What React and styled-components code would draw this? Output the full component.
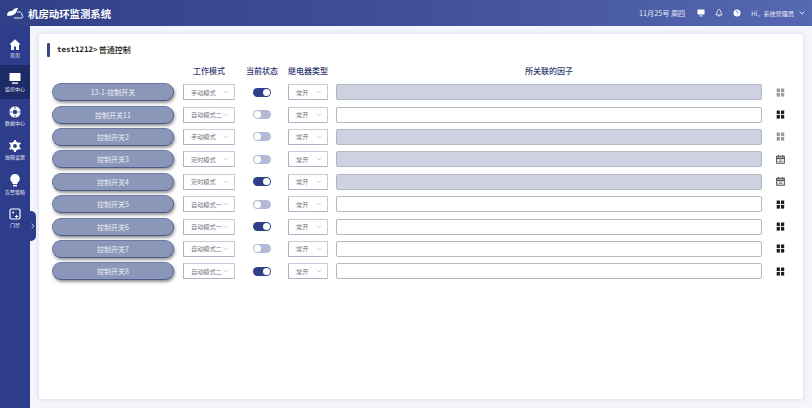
import React from 'react';
import styled, { createGlobalStyle } from 'styled-components';

const Global = createGlobalStyle`
  html, body { margin: 0; padding: 0; height: 100%; background: #f5f6fb; }
  body { font-family: "Noto Sans CJK SC", "Liberation Sans", sans-serif; overflow: hidden; }
`;

const Page = styled.div`
  width: 812px;
  height: 408px;
  display: flex;
  flex-direction: column;
  overflow: hidden;
`;

const Header = styled.header`
  height: 26px;
  flex: none;
  display: flex;
  align-items: center;
  justify-content: space-between;
  background: linear-gradient(90deg, #2f3f88 0%, #3f4f98 50%, #5668b2 100%);
  color: #fff;
  padding: 0 7px 0 6px;
`;

const Brand = styled.div`
  display: flex;
  align-items: center;
  gap: 4px;
  font-size: 10.4px;
  font-weight: 700;
`;

const HeaderRight = styled.div`
  display: flex;
  align-items: center;
  color: #e6e9f6;
`;

const DateText = styled.span`
  margin-right: 12px;
  font-size: 7.2px;
`;

const HeaderIcon = styled.span`
  display: flex;
  margin-right: 10px;
`;

const UserName = styled.span`
  font-size: 6.1px;
  margin-right: 5px;
`;

const Body = styled.div`
  flex: 1;
  display: flex;
  min-height: 0;
`;

const Sidebar = styled.nav`
  position: relative;
  width: 30px;
  flex: none;
  background: #2e3d8b;
  padding-top: 5px;
  display: flex;
  flex-direction: column;
`;

const NavItem = styled.div`
  height: 34px;
  flex: none;
  display: flex;
  flex-direction: column;
  align-items: center;
  justify-content: center;
  gap: 2px;
  color: #e8eaf6;
  font-size: 5px;
  line-height: 6px;
  background: ${p => (p.$active ? '#1c2a66' : 'transparent')};
`;

const Collapse = styled.div`
  position: absolute;
  left: 30px;
  top: 185px;
  width: 6px;
  height: 30px;
  background: #2e3d8b;
  border-radius: 0 5px 5px 0;
  display: flex;
  align-items: center;
  justify-content: center;
`;

const Main = styled.main`
  flex: 1;
  padding: 8px 9px 9px 9px;
  min-width: 0;
`;

const Card = styled.section`
  height: 100%;
  box-sizing: border-box;
  background: #fff;
  border-radius: 3px;
  box-shadow: 0 0 4px 1px #dcdfef;
  padding: 8px 13px 0 8px;
`;

const Crumb = styled.div`
  display: flex;
  align-items: center;
  height: 15px;
  font-size: 8px;
  font-weight: 500;
  color: #222;
`;

const CrumbBar = styled.i`
  width: 3px;
  height: 14px;
  border-radius: 1px;
  background: #3a4789;
  margin-right: 7px;
`;

const CrumbMono = styled.span`
  font-family: "DejaVu Sans Mono", monospace;
  font-size: 7.5px;
  font-weight: 700;
  margin-right: 1px;
`;

const Table = styled.div`
  margin-left: 5px;
`;

const Cols = '122px 9px 52px 18px 18px 17px 40px 8px 426px 14px 9px';

const HeadRow = styled.div`
  display: grid;
  grid-template-columns: ${Cols};
  height: 22px;
  align-items: center;
  margin-top: 2px;
  font-size: 8px;
  font-weight: 500;
  color: #2f3a6e;
`;

const HeadCell = styled.span`
  grid-column: ${p => p.$col};
  white-space: nowrap;
  justify-self: center;
`;

const Row = styled.div`
  display: grid;
  grid-template-columns: ${Cols};
  height: 22.4px;
  align-items: center;
`;

const SwitchButton = styled.div`
  grid-column: 1;
  height: 18px;
  border-radius: 9px;
  background: #8b97b8;
  border: 1px solid #6f7ba6;
  border-bottom: 1.5px solid #4e5a8c;
  border-right-color: #5c6896;
  box-sizing: border-box;
  box-shadow: 1px 2px 3px rgba(60, 60, 70, 0.55);
  color: #eef0f6;
  font-size: 7px;
  display: flex;
  align-items: center;
  justify-content: center;
`;

const Select = styled.div`
  grid-column: ${p => p.$col};
  height: 16px;
  box-sizing: border-box;
  background: #fff;
  border: 1px solid #c9ccd6;
  border-left-color: #aeb2c4;
  border-bottom-color: #aeb2c4;
  border-radius: 1px;
  display: flex;
  align-items: center;
  justify-content: space-between;
  padding: 0 5px 0 7px;
  font-size: 6.2px;
  color: #74777f;
`;

const Toggle = styled.div`
  grid-column: 5;
  justify-self: center;
  position: relative;
  width: 18px;
  height: 9px;
  border-radius: 5px;
  background: ${p => (p.$on ? '#2f3f88' : '#b4b9d6')};
`;

const Knob = styled.i`
  position: absolute;
  top: 1px;
  left: ${p => (p.$on ? '10px' : '1px')};
  width: 7px;
  height: 7px;
  border-radius: 50%;
  background: #fff;
`;

const Factor = styled.div`
  grid-column: 9;
  height: 16px;
  box-sizing: border-box;
  border: 1px solid #b4b6c0;
  border-radius: 2px;
  background: ${p => (p.$disabled ? '#cdd1e2' : '#fff')};
`;

const RowIcon = styled.span`
  grid-column: 11;
  display: flex;
  justify-content: center;
`;

const Chevron = () => (
  <svg width="6" height="4" viewBox="0 0 6 4" fill="none" stroke="#c4c6ce" strokeWidth="0.8">
    <path d="M.8.8 3 3 5.2.8" />
  </svg>
);

const Grid = ({ color }) => (
  <svg width="9" height="9" viewBox="0 0 9 9" fill={color}>
    <rect x="0.7" y="0.5" width="3.2" height="3.6" />
    <rect x="5" y="0.5" width="3.2" height="3.6" />
    <rect x="0.7" y="5" width="3.2" height="3.6" />
    <rect x="5" y="5" width="3.2" height="3.6" />
  </svg>
);

const Calendar = () => (
  <svg width="9" height="9" viewBox="0 0 9 9" fill="none" stroke="#333" strokeWidth="0.9">
    <rect x="0.7" y="1.2" width="7.6" height="7" />
    <path d="M.7 3.2h7.6" strokeWidth="1.2" />
    <path d="M2.5 0v1.5M6.5 0v1.5" strokeWidth="0.9" />
    <path d="M2.5 5h4M2.5 6.600h4" strokeWidth="0.6" />
  </svg>
);

const HomeIcon = () => (
  <svg width="12" height="11" viewBox="0 0 12 11" fill="#fff">
    <path d="M6 .3 .4 5.4h1.6V11h3V7.4h2V11h3V5.4h1.6z" />
  </svg>
);
const MonitorIcon = () => (
  <svg width="12" height="11" viewBox="0 0 12 11" fill="#fff">
    <rect x="0.5" y="0" width="11" height="8" />
    <rect x="3" y="9.4" width="6" height="1.4" />
  </svg>
);
const DataIcon = () => (
  <svg width="12" height="12" viewBox="0 0 12 12" fill="none" stroke="#fff">
    <circle cx="6" cy="6" r="4" strokeWidth="3.4" />
    <path d="M6 0v3M6 9v3M0 6h3M9 6h3" stroke="#2e3d8b" strokeWidth="0.8" />
  </svg>
);
const GearIcon = () => (
  <svg width="12" height="12" viewBox="0 0 12 12" fill="none" stroke="#fff">
    <circle cx="6" cy="6" r="3.2" strokeWidth="2.6" />
    <path d="M6 0v2.4M6 9.6V12M.6 3l2 1.200M9.400 7.800l2 1.200M.6 9l2-1.200M9.400 4.200l2-1.200" strokeWidth="2" />
  </svg>
);
const BulbIcon = () => (
  <svg width="10" height="13" viewBox="0 0 10 13" fill="#fff">
    <path d="M5 0a4.7 4.7 0 0 0-2.600 8.600V10h5.200V8.600A4.700 4.700 0 0 0 5 0z" />
    <rect x="3" y="10.800" width="4" height="1.600" />
  </svg>
);
const DoorIcon = () => (
  <svg width="12" height="12" viewBox="0 0 12 12" fill="none" stroke="#fff">
    <rect x="1" y="1" width="10" height="10" rx="1.500" strokeWidth="1.200" />
    <circle cx="4.200" cy="4.400" r="1" fill="#fff" stroke="none" />
    <path d="M6 8.500h3.200M7.600 7v3" strokeWidth="1" />
  </svg>
);

const CloudLogo = () => (
  <svg width="18" height="12" viewBox="0 0 18 12" fill="none">
    <path d="M1 8.500C1 5 4 3.600 6 4c1-2 4-3.500 6-3-1 2-1.500 5-4 6.500C6 9 3 9 1 8.500z" fill="#fff" />
    <path d="M11 5.500a3 3 0 0 1 5 2.500 2 2 0 0 1 0 3H8" stroke="#fff" strokeWidth="0.9" />
  </svg>
);

const rows = [
  { name: '13-1-控制开关', mode: '手动模式', on: true, disabled: true, icon: 'faded' },
  { name: '控制开关11', mode: '自动模式二', on: false, disabled: false, icon: 'grid' },
  { name: '控制开关2', mode: '手动模式', on: false, disabled: true, icon: 'faded' },
  { name: '控制开关3', mode: '定时模式', on: false, disabled: true, icon: 'cal' },
  { name: '控制开关4', mode: '定时模式', on: true, disabled: true, icon: 'cal' },
  { name: '控制开关5', mode: '自动模式一', on: false, disabled: false, icon: 'grid' },
  { name: '控制开关6', mode: '自动模式一', on: true, disabled: false, icon: 'grid' },
  { name: '控制开关7', mode: '自动模式二', on: false, disabled: false, icon: 'grid' },
  { name: '控制开关8', mode: '自动模式二', on: true, disabled: false, icon: 'grid' },
];

const navs = [
  { label: '首页', icon: <HomeIcon /> },
  { label: '监控中心', icon: <MonitorIcon />, active: true },
  { label: '数据中心', icon: <DataIcon /> },
  { label: '故障设置', icon: <GearIcon /> },
  { label: '告警策略', icon: <BulbIcon /> },
  { label: '门禁', icon: <DoorIcon /> },
];

export default function App() {
  return (
    <Page>
      <Global />
      <Header>
        <Brand><CloudLogo />机房动环监测系统</Brand>
        <HeaderRight>
          <DateText>11月25号 周四</DateText>
          <HeaderIcon>
            <svg width="8" height="8" viewBox="0 0 8 8" fill="#fff"><rect x="0.5" y="0.5" width="7" height="5" /><rect x="2.500" y="6.400" width="3" height="1" /></svg>
          </HeaderIcon>
          <HeaderIcon>
            <svg width="8" height="8" viewBox="0 0 8 8" fill="none" stroke="#fff" strokeWidth="0.8"><path d="M4 .6C2.500.6 2.200 2 2.200 3.400L1 6h6L5.800 3.400C5.800 2 5.500.6 4 .6zM3.200 7h1.600" /></svg>
          </HeaderIcon>
          <HeaderIcon>
            <svg width="8" height="8" viewBox="0 0 8 8"><circle cx="4" cy="4" r="3.500" fill="#fff" /><path d="M3 3a1 1 0 1 1 1.500 1L4 4.800M4 5.800v.5" stroke="#5668b2" strokeWidth="0.7" fill="none" /></svg>
          </HeaderIcon>
          <UserName>Hi，系统管理员</UserName>
          <svg width="6" height="4" viewBox="0 0 6 4" fill="none" stroke="#fff" strokeWidth="0.8"><path d="M.6.6 3 3 5.400.6" /></svg>
        </HeaderRight>
      </Header>
      <Body>
        <Sidebar>
          {navs.map(n => (
            <NavItem key={n.label} $active={n.active}>
              {n.icon}
              <span>{n.label}</span>
            </NavItem>
          ))}
          <Collapse>
            <svg width="4" height="6" viewBox="0 0 4 6" fill="none" stroke="#e6e9f6" strokeWidth="0.8"><path d="M.8.6 3 3 .8 5.400" /></svg>
          </Collapse>
        </Sidebar>
        <Main>
          <Card>
            <Crumb>
              <CrumbBar />
              <CrumbMono>test1212&gt;</CrumbMono>普通控制
            </Crumb>
            <Table>
              <HeadRow>
                <HeadCell $col="3">工作模式</HeadCell>
                <HeadCell $col="5">当前状态</HeadCell>
                <HeadCell $col="7">继电器类型</HeadCell>
                <HeadCell $col="9">所关联的因子</HeadCell>
              </HeadRow>
              {rows.map(r => (
                <Row key={r.name}>
                  <SwitchButton>{r.name}</SwitchButton>
                  <Select $col="3">{r.mode}<Chevron /></Select>
                  <Toggle $on={r.on}><Knob $on={r.on} /></Toggle>
                  <Select $col="7">常开<Chevron /></Select>
                  <Factor $disabled={r.disabled} />
                  <RowIcon>
                    {r.icon === 'cal' ? <Calendar /> : <Grid color={r.icon === 'faded' ? '#9a9a9a' : '#1c1c1c'} />}
                  </RowIcon>
                </Row>
              ))}
            </Table>
          </Card>
        </Main>
      </Body>
    </Page>
  );
}
